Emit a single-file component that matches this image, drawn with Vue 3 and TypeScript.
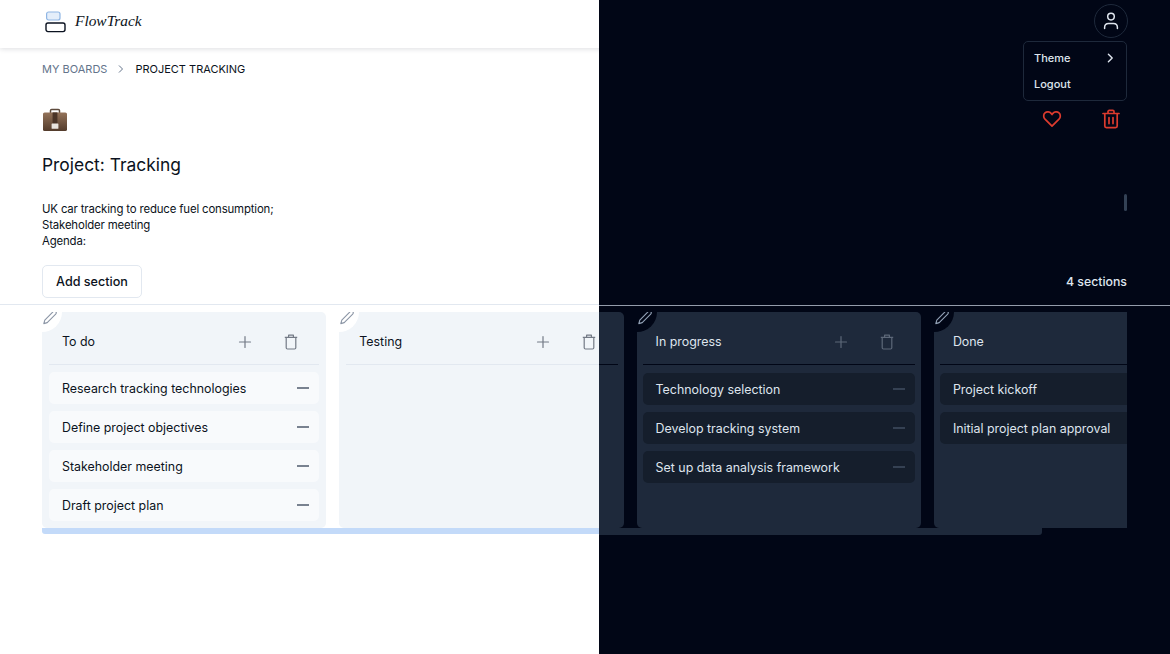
<template>
  <div class="page">
    <div v-for="theme in themes" :key="theme" class="layer" :class="theme">
      <header class="topbar">
        <div class="brand">
          <svg class="logo" width="22" height="22" viewBox="0 0 22 22" fill="none">
            <rect x="1.6" y="1" width="13.4" height="8" rx="2" fill="#e4eefa" stroke="#8fb6e4" stroke-width="1.2" />
            <rect x="1" y="12" width="19" height="8.6" rx="2" stroke="#0b1220" stroke-width="1.4" />
          </svg>
          <span class="brand-name">FlowTrack</span>
        </div>
        <button class="avatar">
          <svg width="16" height="18" viewBox="0 0 16 18" fill="none" stroke="currentColor" stroke-width="1.5" stroke-linecap="round">
            <circle cx="8" cy="4.6" r="3.3" />
            <path d="M1.6 16.6v-1.2c0-2.4 1.8-4 4-4h4.8c2.2 0 4 1.6 4 4v1.2" />
          </svg>
        </button>
        <div class="menu">
          <div class="menu-row">
            <span>Theme</span>
            <svg width="10" height="10" viewBox="0 0 10 10" fill="none" stroke="currentColor" stroke-width="1.4" stroke-linecap="round" stroke-linejoin="round">
              <path d="M3.4 1.2 7.2 5 3.4 8.8" />
            </svg>
          </div>
          <div class="menu-row">Logout</div>
        </div>
      </header>

      <main class="content">
        <nav class="crumbs">
          <span class="crumb-root">MY BOARDS</span>
          <svg width="8" height="10" viewBox="0 0 8 10" fill="none" stroke="#64748b" stroke-width="1">
            <path d="M2 1.5 5.5 5 2 8.5" />
          </svg>
          <span class="crumb-current">PROJECT TRACKING</span>
        </nav>

        <div class="emoji-row">
          <svg width="26" height="24" viewBox="0 0 26 24">
            <defs>
              <linearGradient :id="`bag-${theme}`" x1="0" y1="0" x2="0" y2="1">
                <stop offset="0" stop-color="#94735a" />
                <stop offset="1" stop-color="#533b2b" />
              </linearGradient>
            </defs>
            <path d="M8.5 5V2.6c0-.8.5-1.2 1.2-1.2h6.6c.7 0 1.2.4 1.2 1.2V5" fill="none" stroke="#5d4a3c" stroke-width="1.5" />
            <rect x="1" y="4.4" width="24" height="18.6" rx="1.6" :fill="`url(#bag-${theme})`" />
            <rect x="10.6" y="4.4" width="4.8" height="12" fill="#4a3427" />
            <rect x="9.6" y="15.6" width="6.8" height="5.2" rx=".5" fill="#e9e4de" />
          </svg>
          <div class="board-actions">
            <svg width="20" height="20" viewBox="0 0 20 20" fill="none" stroke="#dc3b2e" stroke-width="1.7" stroke-linejoin="round">
              <path d="M10 17.2 3 10.2C1.2 8.3 1.3 5.4 3 3.9c1.8-1.6 4.6-1.3 6.1.5l.9 1.1.9-1.1c1.5-1.8 4.3-2.1 6.1-.5 1.7 1.5 1.8 4.4 0 6.3z" />
            </svg>
            <svg width="18" height="20" viewBox="0 0 18 20" fill="none" stroke="#dc3b2e" stroke-width="1.7" stroke-linecap="round" stroke-linejoin="round">
              <path d="M1 4.5h16M6 4.5V2.6c0-.7.5-1.2 1.2-1.2h3.6c.7 0 1.2.5 1.2 1.2v1.9M2.8 4.5V17c0 .9.7 1.6 1.6 1.6h9.2c.9 0 1.6-.7 1.6-1.6V4.5M7 8.6v6M11 8.6v6" />
            </svg>
          </div>
        </div>

        <h1 class="title">Project: Tracking</h1>

        <p class="description">
          UK car tracking to reduce fuel consumption;<br />
          Stakeholder meeting<br />
          Agenda:
        </p>

        <div class="section-bar">
          <button class="add-section">Add section</button>
          <span class="count">{{ sections.length }} sections</span>
          <i class="mini-scroll" />
        </div>
      </main>

      <div class="board">
        <div class="columns">
          <section v-for="section in sections" :key="section.title" class="column">
            <span class="edit">
              <svg width="16" height="16" viewBox="0 0 16 16" fill="none" stroke="currentColor" stroke-width="1.1" stroke-linejoin="round">
                <path d="M11.2 1.6c.7-.7 1.8-.7 2.5 0 .7.7.7 1.8 0 2.5L5.2 12.6l-3.4 1 1-3.4z" />
              </svg>
            </span>
            <div class="column-head">
              <span class="column-title">{{ section.title }}</span>
              <svg class="tool" width="14" height="14" viewBox="0 0 14 14" stroke="currentColor" stroke-width="1.2" stroke-linecap="round">
                <path d="M7 1.5v11M1.5 7h11" />
              </svg>
              <svg class="tool" width="14" height="16" viewBox="0 0 14 16" fill="none" stroke="currentColor" stroke-width="1.2" stroke-linejoin="round">
                <path d="M.8 3.4h12.4M4.6 3.4V1.2h4.8v2.2M2.2 3.4v10.4c0 .7.5 1.2 1.2 1.2h7.2c.7 0 1.2-.5 1.2-1.2V3.4" />
              </svg>
            </div>
            <ul class="tasks">
              <li v-for="task in section.tasks" :key="task" class="task">
                <span>{{ task }}</span>
                <svg width="12" height="2" viewBox="0 0 12 2"><path d="M0 1h12" stroke="currentColor" stroke-width="1.3" /></svg>
              </li>
            </ul>
          </section>
        </div>
        <div class="scroll-thumb" />
      </div>
    </div>
  </div>
</template>

<script setup lang="ts">
interface Section {
  title: string;
  tasks: string[];
}

const themes = ["light", "dark"];

const sections: Section[] = [
  {
    title: "To do",
    tasks: ["Research tracking technologies", "Define project objectives", "Stakeholder meeting", "Draft project plan"]
  },
  { title: "Testing", tasks: [] },
  {
    title: "In progress",
    tasks: ["Technology selection", "Develop tracking system", "Set up data analysis framework"]
  },
  { title: "Done", tasks: ["Project kickoff", "Initial project plan approval"] }
];
</script>

<style>
html,
body {
  margin: 0;
  background: #fff;
}
</style>

<style scoped>
.page {
  display: grid;
  width: 1170px;
  height: 654px;
  overflow: hidden;
  font-family: Inter, "Liberation Sans", sans-serif;
}
.layer {
  grid-area: 1 / 1;
  display: flex;
  flex-direction: column;
  min-width: 0;
  isolation: isolate;
  --bg: #fff;
  --text: #0b1220;
  --muted: #64748b;
  --line: #e2e8f0;
  --col: #f1f5f9;
  --task: #f8fafc;
  --tool: #737a86;
  --edit: #8b95a5;
  --minus: #334155;
  --rule: #e2e8f0;
  --thumb: #c3daf9;
  --outline: #e2e8f0;
  background: var(--bg);
  color: var(--text);
}
.dark {
  z-index: 1;
  --bg: #010616;
  --text: #dfe5ee;
  --muted: #64748b;
  --line: #949cab;
  --col: #1e293b;
  --task: #151e2c;
  --tool: #5d6879;
  --edit: #94a3b8;
  --minus: #475569;
  --rule: #010616;
  --thumb: #1e293b;
  --outline: #1e293b;
  clip-path: inset(0 0 0 599px);
}
.topbar {
  position: relative;
  flex: none;
  height: 48px;
  box-sizing: border-box;
  padding: 0 42px 0 45px;
  display: flex;
  align-items: center;
  justify-content: space-between;
  box-shadow: 0 1px 5px rgba(15, 23, 42, 0.14);
}
.dark .topbar {
  box-shadow: none;
}
.brand {
  display: flex;
  align-items: center;
  gap: 8px;
  margin-top: -6px;
}
.logo {
  margin-top: 1px;
}
.brand-name {
  font: italic 15.4px "Liberation Serif", serif;
  color: #0b1220;
}
.avatar {
  width: 34px;
  height: 34px;
  margin-top: -6px;
  padding: 0;
  display: flex;
  align-items: center;
  justify-content: center;
  background: none;
  border: 1px solid var(--outline);
  border-radius: 50%;
  color: var(--text);
}
.menu {
  position: absolute;
  top: 41px;
  right: 43px;
  width: 104px;
  height: 60px;
  box-sizing: border-box;
  padding: 3px 11px 3px 10px;
  border: 1px solid var(--outline);
  border-radius: 5px;
  background: var(--bg);
  font-size: 11px;
  font-weight: 500;
  z-index: 2;
}
.menu-row {
  height: 26px;
  display: flex;
  align-items: center;
  justify-content: space-between;
}
.content {
  flex: none;
  height: 256px;
  box-sizing: border-box;
  padding: 0 43px 0 42px;
  display: flex;
  flex-direction: column;
}
.dark .content {
  height: 257px;
}
.crumbs {
  height: 42px;
  display: flex;
  align-items: center;
  gap: 10px;
  font-size: 11px;
}
.crumb-root {
  color: var(--muted);
}
.crumb-current {
  color: var(--text);
}
.emoji-row {
  height: 24px;
  margin-top: 18px;
  display: flex;
  align-items: center;
  justify-content: space-between;
}
.board-actions {
  display: flex;
  align-items: center;
  gap: 40px;
  margin: 0 7px 2px 0;
}
.title {
  margin: 20px 0 0;
  font-size: 17.4px;
  line-height: 26px;
  font-weight: 400;
}
.description {
  margin: 23px 0 0;
  font-size: 11.4px;
  line-height: 16px;
  letter-spacing: -0.15px;
}
.section-bar {
  position: relative;
  margin-top: 16px;
  display: flex;
  align-items: center;
  justify-content: space-between;
}
.add-section {
  width: 100px;
  height: 33px;
  padding: 0;
  border: 1px solid var(--outline);
  border-radius: 5px;
  background: var(--bg);
  color: var(--text);
  font: 500 12.6px Inter, "Liberation Sans", sans-serif;
}
.count {
  font-size: 12.3px;
  font-weight: 500;
}
.mini-scroll {
  position: absolute;
  right: 0;
  top: -71px;
  width: 3px;
  height: 17px;
  border-radius: 2px;
  background: #334155;
}
.board {
  flex: none;
  box-sizing: border-box;
  padding: 7px 43px 0 42px;
  border-top: 1px solid var(--line);
}
.dark .board {
  padding-top: 6px;
}
.columns {
  display: flex;
  gap: 13px;
  overflow: hidden;
}
.column {
  position: relative;
  flex: none;
  width: 284.3px;
  height: 216px;
  box-sizing: border-box;
  padding: 0 7px;
  border-radius: 5px;
  background: var(--col);
}
.dark .column {
  padding: 0 6px;
}
.edit {
  position: absolute;
  top: 0;
  left: 0;
  width: 20px;
  height: 20px;
  display: flex;
  align-items: flex-start;
  justify-content: flex-start;
  border-bottom-right-radius: 20px;
  background: var(--bg);
  color: var(--edit);
}
.edit svg {
  flex: none;
  margin: -2px 0 0 0;
}
.column-head {
  height: 53px;
  margin-bottom: 7px;
  box-sizing: border-box;
  padding: 7px 21px 0 13px;
  display: flex;
  align-items: center;
  gap: 32px;
  border-bottom: 1px solid var(--rule);
  color: var(--tool);
}
.dark .column-head {
  margin-bottom: 8px;
}
.column-title {
  flex: 1;
  color: var(--text);
  font-size: 12.4px;
  font-weight: 400;
}
.tasks {
  margin: 0;
  padding: 0;
  list-style: none;
  display: flex;
  flex-direction: column;
  gap: 7px;
}
.task {
  height: 32px;
  box-sizing: border-box;
  padding: 0 10px 0 13px;
  display: flex;
  align-items: center;
  justify-content: space-between;
  border-radius: 5px;
  background: var(--task);
  font-size: 12.4px;
}
.task svg {
  color: var(--minus);
}
.scroll-thumb {
  width: 1000px;
  height: 6px;
  background: var(--thumb);
  border-radius: 0 0 3px 3px;
}
.dark .scroll-thumb {
  height: 7px;
}
</style>
